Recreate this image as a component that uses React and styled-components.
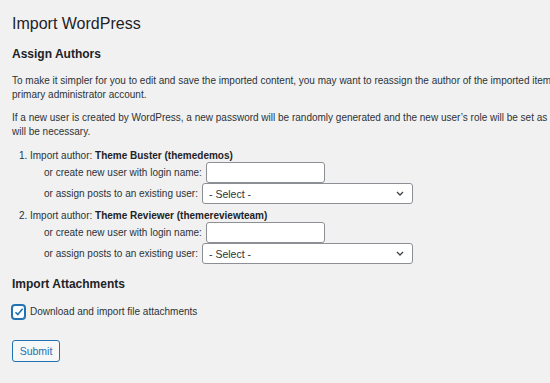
import React from "react";
import styled, { createGlobalStyle } from "styled-components";

const GlobalStyle = createGlobalStyle`
  html, body {
    margin: 0;
    padding: 0;
    overflow: hidden;
    background: #f1f1f1;
  }
  body {
    font-family: "Liberation Sans", Arial, sans-serif;
    color: #2c3338;
    font-size: 10px;
  }
`;

const Wrap = styled.div`
  padding: 13px 0 0 12px;
  width: 900px;
`;

const Title = styled.h1`
  margin: 0;
  font-size: 16px;
  font-weight: 400;
  line-height: 21px;
  color: #1d2327;
`;

const Heading = styled.h2`
  margin: ${(p) => p.$top || 12}px 0 0;
  font-size: 12px;
  font-weight: 700;
  line-height: 17px;
  color: #1d2327;
`;

const Para = styled.p`
  margin: ${(p) => p.$top || 9}px 0 0;
  line-height: 14px;
  white-space: nowrap;
`;

const AuthorList = styled.ol`
  margin: 10px 0 0;
  padding-left: 18px;
`;

const Author = styled.li`
  line-height: 14px;
  margin-bottom: 5px;
  strong {
    font-weight: 700;
    color: #1d2327;
  }
`;

const Fields = styled.div`
  margin: -1px 0 0 14px;
`;

const Row = styled.div`
  display: flex;
  align-items: center;
  height: 21px;
  gap: 4px;
  white-space: nowrap;
`;

const TextInput = styled.input`
  box-sizing: border-box;
  width: 119px;
  height: 21px;
  margin: 0;
  border: 1px solid #8c8f94;
  border-radius: 3px;
  background: #fff;
  font: inherit;
`;

const SelectBox = styled.div`
  box-sizing: border-box;
  width: 211px;
  height: 21px;
  display: flex;
  align-items: center;
  justify-content: space-between;
  padding: 0 8px 0 6px;
  border: 1px solid #8c8f94;
  border-radius: 3px;
  background: #fff;
  color: #2c3338;
  font-size: 10.5px;
`;

const CheckRow = styled.label`
  display: flex;
  align-items: center;
  gap: 5px;
  margin-top: 12px;
  line-height: 14px;
`;

const CheckBox = styled.span`
  box-sizing: border-box;
  width: 13px;
  height: 14px;
  display: flex;
  align-items: center;
  justify-content: center;
  border: 1px solid #2271b1;
  border-radius: 3px;
  background: #fff;
  box-shadow: 0 0 0 1px #2271b1;
`;

const Button = styled.button`
  display: block;
  margin-top: 21px;
  box-sizing: border-box;
  width: 48px;
  height: 22px;
  padding: 0;
  border: 1px solid #2271b1;
  border-radius: 3px;
  background: #f6f7f7;
  color: #2271b1;
  font-family: inherit;
  font-size: 10.5px;
`;

const Chevron = () => (
  <svg width="8" height="5" viewBox="0 0 8 5">
    <path d="M1 1l3 3 3-3" fill="none" stroke="#3c434a" strokeWidth="1.3" />
  </svg>
);

const Check = () => (
  <svg width="10" height="10" viewBox="0 0 10 10">
    <path d="M1.5 5.2l2.3 2.4L8.6 1.8" fill="none" stroke="#2271b1" strokeWidth="1.6" />
  </svg>
);

const authors = [
  { name: "Theme Buster", login: "themedemos" },
  { name: "Theme Reviewer", login: "themereviewteam" },
];

export default function App() {
  return (
    <>
      <GlobalStyle />
      <Wrap>
        <Title>Import WordPress</Title>
        <Heading>Assign Authors</Heading>
        <Para $top={11}>
          To make it simpler for you to edit and save the imported content, you may want to reassign the author of the imported item to an existing user of this site, such as your
          <br />
          primary administrator account.
        </Para>
        <Para>
          If a new user is created by WordPress, a new password will be randomly generated and the new user’s role will be set as subscriber. Manually changing the new user’s details
          <br />
          will be necessary.
        </Para>
        <AuthorList>
          {authors.map((a) => (
            <Author key={a.login}>
              Import author: <strong>{a.name} ({a.login})</strong>
              <Fields>
                <Row>
                  or create new user with login name: <TextInput type="text" />
                </Row>
                <Row>
                  or assign posts to an existing user:
                  <SelectBox>
                    - Select -
                    <Chevron />
                  </SelectBox>
                </Row>
              </Fields>
            </Author>
          ))}
        </AuthorList>
        <Heading $top={12}>Import Attachments</Heading>
        <CheckRow>
          <CheckBox>
            <Check />
          </CheckBox>
          Download and import file attachments
        </CheckRow>
        <Button>Submit</Button>
      </Wrap>
    </>
  );
}
